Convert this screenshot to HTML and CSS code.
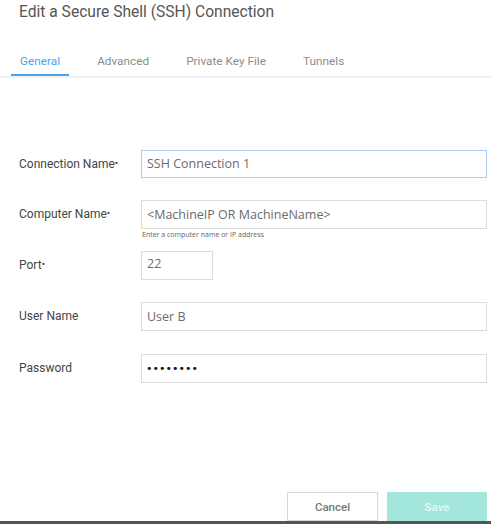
FILE: index.html
```html
<!DOCTYPE html>
<html>
<head>
<meta charset="utf-8">
<link rel="stylesheet" href="styles.css">
</head>
<body>
<div class="dialog">
  <h1 class="title">Edit a Secure Shell (SSH) Connection</h1>
  <nav class="tabs">
    <span class="tab active">General</span>
    <span class="tab">Advanced</span>
    <span class="tab">Private Key File</span>
    <span class="tab">Tunnels</span>
  </nav>
  <form class="form">
    <div class="row first">
      <label class="label">Connection Name<span class="req">•</span></label>
      <div class="field"><div class="input focus">SSH Connection 1</div></div>
    </div>
    <div class="row">
      <label class="label">Computer Name<span class="req">•</span></label>
      <div class="field">
        <div class="input">&lt;MachineIP OR MachineName&gt;</div>
        <div class="hint">Enter a computer name or IP address</div>
      </div>
    </div>
    <div class="row port-row">
      <label class="label">Port<span class="req">•</span></label>
      <div class="field"><div class="input small">22</div></div>
    </div>
    <div class="row">
      <label class="label">User Name</label>
      <div class="field"><div class="input">User B</div></div>
    </div>
    <div class="row last">
      <label class="label">Password</label>
      <div class="field"><div class="input pw">••••••••</div></div>
    </div>
  </form>
  <div class="footer">
    <button class="btn cancel" type="button">Cancel</button>
    <button class="btn save" type="button">Save</button>
  </div>
  <div class="bottom-bar"></div>
</div>
</body>
</html>
```
FILE: styles.css
```css
* { box-sizing: border-box; }
html, body { margin: 0; padding: 0; background: #fff; }
.dialog {
  width: 491px;
  height: 524px;
  display: flex;
  flex-direction: column;
  font-family: Roboto, "Liberation Sans", sans-serif;
  overflow: hidden;
}
.title {
  margin: 0;
  padding: 0 0 0 19px;
  font-size: 15.6px;
  font-weight: 400;
  line-height: 24px;
  color: #555;
}
.tabs {
  display: flex;
  gap: 19px;
  padding-left: 11px;
  margin-top: 25px;
  border-bottom: 2px solid #f0f2f4;
}
.tab {
  padding: 5px 9px 6px;
  font-size: 11.8px;
  line-height: 14px;
  color: #8c8c8c;
  border-bottom: 2px solid transparent;
}
.tab.active {
  color: #4aa3f0;
  border-bottom-color: #4aa3f0;
}
.form {
  display: flex;
  flex-direction: column;
  padding: 0 4px 0 19px;
}
.row {
  display: flex;
  align-items: flex-start;
  margin-top: 22px;
}
.row.first { margin-top: 72px; }
.port-row { margin-top: 10px; }
.row.last { margin-top: 23px; }
.label {
  width: 122px;
  flex: none;
  font-size: 12px;
  line-height: 28px;
  color: #444;
}
.req { font-size: 10px; vertical-align: 1px; }
.field { flex: 1; }
.input {
  height: 29px;
  border: 1px solid #dadcde;
  padding: 0 5px;
  font-family: "Open Sans", "Liberation Sans", sans-serif;
  font-size: 12.5px;
  line-height: 27px;
  color: #6b6b6b;
}
.input.focus { border-color: #a8cdf6; height: 28px; line-height: 26px; }
.input.small { width: 72px; line-height: 24px; }
.input.pw { color: #111; font-family: "DejaVu Sans", sans-serif; font-size: 11px; padding-left: 4px; }
.hint {
  font-family: "Open Sans", "Liberation Sans", sans-serif;
  font-size: 7px;
  line-height: 12px;
  color: #666;
  margin-left: 1px;
}
.footer {
  margin-top: auto;
  display: flex;
  justify-content: flex-end;
  gap: 9px;
  padding-right: 4px;
}
.btn {
  height: 29px;
  font-family: Roboto, "Liberation Sans", sans-serif;
  font-size: 11.5px;
  font-weight: 500;
  border: 1px solid #d8d8d8;
  background: #fff;
  color: #777;
  padding: 0;
}
.cancel { width: 91px; }
.save {
  width: 100px;
  background: #a2e6dc;
  border-color: #a2e6dc;
  color: #e6f8f5;
}
.bottom-bar {
  height: 3px;
  background: #555;
  flex: none;
}
```
